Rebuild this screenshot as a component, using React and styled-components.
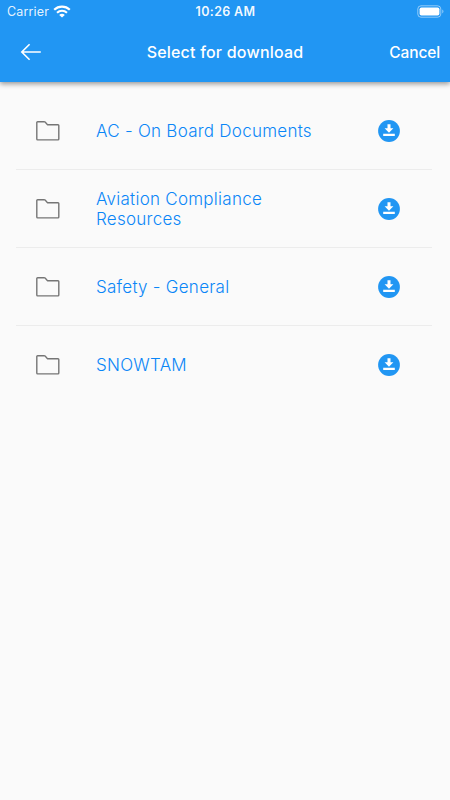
import React from 'react';
import styled, { createGlobalStyle } from 'styled-components';

const folders = [
  'AC - On Board Documents',
  'Aviation Compliance Resources',
  'Safety - General',
  'SNOWTAM',
];

const GlobalStyle = createGlobalStyle`
  * {
    box-sizing: border-box;
  }
  body {
    margin: 0;
    background: #fafafa;
    font-family: Inter, 'Liberation Sans', sans-serif;
  }
`;

const Screen = styled.div`
  width: 450px;
  height: 800px;
  overflow: hidden;
  background: #fafafa;
`;

const Header = styled.header`
  height: 82px;
  background: #2196f3;
  color: #fff;
  box-shadow: 0 2px 5px rgba(0, 0, 0, 0.4);
`;

const StatusBar = styled.div`
  display: grid;
  grid-template-columns: 1fr auto 1fr;
  align-items: center;
  height: 22px;
  padding: 0 6px 0 7px;
`;

const Carrier = styled.div`
  display: flex;
  align-items: center;
  gap: 4px;
  font-size: 12.5px;
  letter-spacing: 0.15px;
  color: rgba(255, 255, 255, 0.9);
`;

const Clock = styled.time`
  font-size: 12.5px;
  font-weight: 600;
  letter-spacing: 0.35px;
  color: rgba(255, 255, 255, 0.94);
`;

const Battery = styled.svg`
  justify-self: end;
`;

const NavBar = styled.nav`
  display: grid;
  grid-template-columns: 1fr auto 1fr;
  align-items: center;
  height: 60px;
  padding: 0 10px 0 20px;
`;

const Back = styled.button`
  display: flex;
  justify-self: start;
  padding: 0;
  border: 0;
  background: none;
  color: inherit;
`;

const Title = styled.h1`
  margin: 0 0 0 -10px;
  font-size: 16px;
  font-weight: 500;
  letter-spacing: 0.2px;
`;

const Cancel = styled.button`
  justify-self: end;
  padding: 0;
  border: 0;
  background: none;
  color: inherit;
  font: 500 15.5px Inter, sans-serif;
  letter-spacing: -0.12px;
`;

const List = styled.ul`
  margin: 0;
  padding: 9.5px 18px 0 16px;
  list-style: none;
`;

const Row = styled.li`
  display: flex;
  align-items: center;
  height: 78.2px;
  padding: 1px 32px 0 20px;
  border-bottom: 1px solid #ececec;

  &:last-child {
    border-bottom-color: transparent;
  }
`;

const Name = styled.span`
  width: 232px;
  margin: 1px auto 0 36px;
  color: #0a86f7;
  font-size: 17px;
  font-weight: 300;
  line-height: 20.5px;
  letter-spacing: 0.26px;
`;

const WifiIcon = () => (
  <svg width="18" height="13" viewBox="0 0 18 13" fill="none" stroke="#fff">
    <path d="M1.2 4.8C5.6 .6 12.4 .6 16.8 4.8" strokeWidth="2.2" />
    <path d="M4 7.7C6.9 5 11.1 5 14 7.7" strokeWidth="2.1" />
    <path d="M9 12.6L6.2 9.9C7.8 8.5 10.2 8.5 11.8 9.9Z" fill="#fff" stroke="none" />
  </svg>
);

const BatteryIcon = () => (
  <Battery width="27" height="13" viewBox="0 0 27 13">
    <rect x=".8" y=".8" width="23" height="11.4" rx="3.2" fill="none" stroke="#fff" strokeOpacity=".5" />
    <rect x="2.6" y="2.4" width="19.8" height="8.2" rx="1.8" fill="#fff" />
    <path d="M25.3 4.6c1.5.6 1.5 3.2 0 3.8z" fill="#fff" fillOpacity=".55" />
  </Battery>
);

const BackIcon = () => (
  <svg width="22" height="18" viewBox="0 0 22 18" fill="none" stroke="currentColor" strokeWidth="1.6">
    <path d="M9.6 1.2L1.8 9l7.8 7.8M1.8 9h19" />
  </svg>
);

const FolderIcon = () => (
  <svg width="24" height="20" viewBox="0 0 24 20" fill="none" stroke="#757575" strokeWidth="1.4">
    <path
      d="M1.6.7h6.5c.4 0 .7.1 1 .4l2.2 2.3c.2.2.5.3.8.3h9.9c.5 0 .8.3.8.8v13.6c0 .5-.3.8-.8.8H1.6c-.5 0-.8-.3-.8-.8V1.5c0-.5.3-.8.8-.8z"
    />
  </svg>
);

const DownloadIcon = () => (
  <svg width="22" height="22" viewBox="0 0 22 22">
    <circle cx="11" cy="11" r="10.9" fill="#2196f3" />
    <path d="M9.5 4.2h3v4h2.9L11 12.7 6.6 8.2h2.9zM5.2 13.8h11.6V16H5.2z" fill="#fff" />
  </svg>
);

const App = () => (
  <>
    <GlobalStyle />
    <Screen>
      <Header>
        <StatusBar>
          <Carrier>
            Carrier
            <WifiIcon />
          </Carrier>
          <Clock>10:26 AM</Clock>
          <BatteryIcon />
        </StatusBar>
        <NavBar>
          <Back aria-label="Back">
            <BackIcon />
          </Back>
          <Title>Select for download</Title>
          <Cancel>Cancel</Cancel>
        </NavBar>
      </Header>
      <List>
        {folders.map(name => (
          <Row key={name}>
            <FolderIcon />
            <Name>{name}</Name>
            <DownloadIcon />
          </Row>
        ))}
      </List>
    </Screen>
  </>
);

export default App;
